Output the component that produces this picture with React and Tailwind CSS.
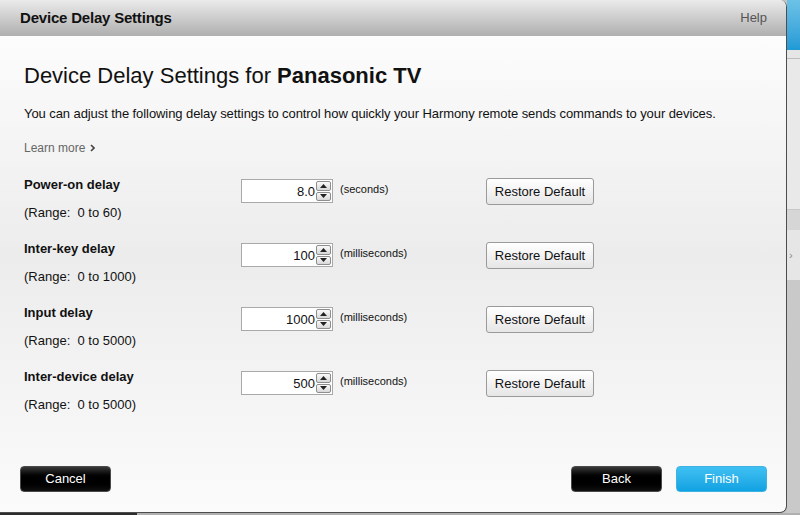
const rows = [
  { label: "Power-on delay", range: "(Range:  0 to 60)", value: "8.0", unit: "(seconds)" },
  { label: "Inter-key delay", range: "(Range:  0 to 1000)", value: "100", unit: "(milliseconds)" },
  { label: "Input delay", range: "(Range:  0 to 5000)", value: "1000", unit: "(milliseconds)" },
  { label: "Inter-device delay", range: "(Range:  0 to 5000)", value: "500", unit: "(milliseconds)" },
];

function Spinner({ value }) {
  return (
    <div className="mt-[2px] flex h-[24px] w-[92px] items-center border border-[#a9a9a9] bg-white pr-[1px]">
      <span className="flex-1 text-right text-[13px] leading-none text-[#111]">{value}</span>
      <div className="ml-[1px] flex h-[20px] w-[15px] flex-col gap-[1px]">
        <div className="flex flex-1 items-center justify-center rounded-[2px] border border-[#8e8e8e] bg-gradient-to-b from-[#fafafa] to-[#d8d8d8]">
          <svg width="7" height="4" viewBox="0 0 7 4"><path d="M0 4 L3.5 0 L7 4 Z" fill="#222" /></svg>
        </div>
        <div className="flex flex-1 items-center justify-center rounded-[2px] border border-[#8e8e8e] bg-gradient-to-b from-[#fafafa] to-[#d8d8d8]">
          <svg width="7" height="4" viewBox="0 0 7 4"><path d="M0 0 L7 0 L3.5 4 Z" fill="#222" /></svg>
        </div>
      </div>
    </div>
  );
}

function DarkButton({ children }) {
  return (
    <button className="flex h-[26px] w-[91px] items-center justify-center rounded-[4px] border border-[#4a4a4a] bg-gradient-to-b from-[#3a3a3a] via-[#000] to-[#111] text-[13px] text-white">
      {children}
    </button>
  );
}

export default function App() {
  return (
    <div className="flex h-[515px] w-[800px] flex-col overflow-hidden bg-[#c4c4c4] font-['Liberation_Sans',Arial,sans-serif]">
      <div className="flex h-[513px]">
        <div className="flex w-[787px] flex-col overflow-hidden rounded-tr-[7px] rounded-br-[7px] border-r border-b border-[#4d4d4d] bg-gradient-to-b from-[#ffffff] via-[#ececec] to-[#fbfbfb]">
          <div className="flex h-[36px] shrink-0 items-center justify-between bg-gradient-to-b from-[#ebebeb] to-[#afafaf] pl-[20px] pr-[19px]">
            <span className="text-[15px] font-bold tracking-[-0.2px] text-[#111]">Device Delay Settings</span>
            <span className="text-[13px] text-[#555]">Help</span>
          </div>

          <div className="flex flex-1 flex-col pl-[24px] pr-[19px] pb-[20px]">
            <h1 className="mt-[27px] text-[22px] leading-[26px] text-[#111]">
              Device Delay Settings for <span className="font-bold">Panasonic TV</span>
            </h1>
            <p className="mt-[17px] text-[13px] leading-[16px] tracking-[-0.08px] text-[#111]">
              You can adjust the following delay settings to control how quickly your Harmony remote sends commands to your devices.
            </p>
            <div className="mt-[18px] flex items-center gap-[5px] text-[12px] leading-[16px] text-[#666]">
              Learn more
              <svg width="5" height="8" viewBox="0 0 5 8"><path d="M1 1 L4 4 L1 7" fill="none" stroke="#444" strokeWidth="1.6" /></svg>
            </div>

            <div className="mt-[21px] flex flex-col gap-[20px]">
              {rows.map((r) => (
                <div key={r.label} className="flex items-start">
                  <div className="flex w-[217px] flex-col gap-[12px] text-[13px] leading-[16px] text-[#111]">
                    <span className="font-bold">{r.label}</span>
                    <span className="whitespace-pre">{r.range}</span>
                  </div>
                  <Spinner value={r.value} />
                  <span className="mt-[5px] ml-[7px] w-[146px] text-[11px] leading-[14px] text-[#111]">{r.unit}</span>
                  <button className="mt-[1px] h-[27px] w-[108px] rounded-[3px] border border-[#9a9a9a] bg-gradient-to-b from-[#ffffff] to-[#e6e6e6] text-[13px] text-[#111]">
                    Restore Default
                  </button>
                </div>
              ))}
            </div>

            <div className="mt-auto flex items-center">
              <div className="-ml-[4px]">
                <DarkButton>Cancel</DarkButton>
              </div>
              <div className="ml-auto flex gap-[14px]">
                <DarkButton>Back</DarkButton>
                <button className="flex h-[26px] w-[91px] items-center justify-center rounded-[4px] border border-[#3fb2e2] bg-gradient-to-b from-[#3ec0f2] to-[#0ea2e2] text-[13px] text-white">
                  Finish
                </button>
              </div>
            </div>
          </div>
        </div>

        <div className="flex flex-1 flex-col">
          <div className="h-[50px] bg-gradient-to-b from-[#6cc2e6] to-[#1e9ad6]" />
          <div className="h-[8px] bg-[#e6e6e6]" />
          <div className="h-[1px] bg-[#bdbdbd]" />
          <div className="h-[150px] bg-[#e9e9e9]" />
          <div className="h-[1px] bg-[#c8c8c8]" />
          <div className="h-[20px] bg-[#d6d6d6]" />
          <div className="flex h-[50px] items-center bg-[#e6e6e6] pl-[2px] text-[11px] text-[#888]">›</div>
          <div className="flex-1 bg-[#c9c9c9]" />
        </div>
      </div>
      <div className="flex h-[2px]">
        <div className="w-[137px] bg-[#2c2c2c]" />
        <div className="flex-1 bg-[#b0b0b0]" />
      </div>
    </div>
  );
}
